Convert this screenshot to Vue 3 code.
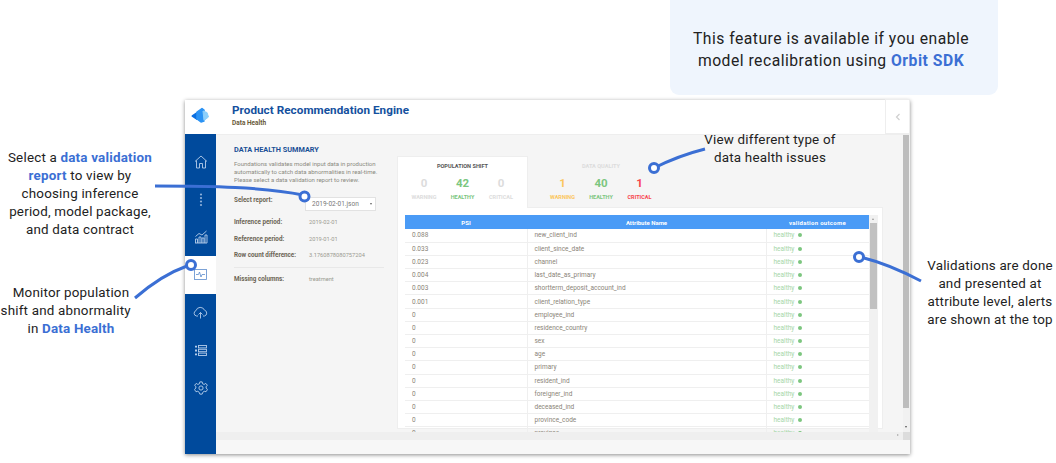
<script setup>
const rows = [
  ['0.088', 'new_client_ind'],
  ['0.033', 'client_since_date'],
  ['0.023', 'channel'],
  ['0.004', 'last_date_as_primary'],
  ['0.003', 'shortterm_deposit_account_ind'],
  ['0.001', 'client_relation_type'],
  ['0', 'employee_ind'],
  ['0', 'residence_country'],
  ['0', 'sex'],
  ['0', 'age'],
  ['0', 'primary'],
  ['0', 'resident_ind'],
  ['0', 'foreigner_ind'],
  ['0', 'deceased_ind'],
  ['0', 'province_code'],
  ['0', 'province'],
]

const info = [
  ['Inference period:', '2019-02-01'],
  ['Reference period:', '2019-01-01'],
  ['Row count difference:', '3.1760878080757204'],
]
</script>

<template>
  <div class="page">
    <div class="window">
      <header class="top">
        <div class="logo">
          <svg width="19" height="17" viewBox="0 0 19 17" stroke-linejoin="round">
            <path d="M1.500 9 L6 6 L6 12 Z" fill="#0b6ee0" stroke="#0b6ee0" stroke-width="2" />
            <path d="M6 5 L11 1.500 L13 3 L13 14 L10 15 L6 12 Z" fill="#2a92f4" stroke="#2a92f4" stroke-width="1.500" />
            <path d="M12 4 L16 5.500 L17.500 10 L13 13.500 Z" fill="#8ccffb" stroke="#8ccffb" stroke-width="1" />
          </svg>
        </div>
        <div class="titles">
          <div class="app-name">Product Recommendation Engine</div>
          <div class="app-sub">Data Health</div>
        </div>
        <button class="collapse">
          <svg width="6" height="8" viewBox="0 0 6 8"><path d="M4.500 1 L1.500 4 L4.500 7" fill="none" stroke="#cfcfcf" stroke-width="1.200" /></svg>
        </button>
      </header>

      <div class="body">
        <nav class="side">
          <div class="nav-item">
            <svg width="14" height="14" viewBox="0 0 14 14" fill="none" stroke="#b5cdea" stroke-width=".9">
              <path d="M1 6.500 L7 1 L13 6.500 M2.500 5.500 V13 H5.500 V8.500 H8.500 V13 H11.500 V5.500" />
            </svg>
          </div>
          <div class="nav-item">
            <svg width="4" height="14" viewBox="0 0 4 14" fill="#8fb0d9">
              <circle cx="2" cy="1.500" r="1.100" /><circle cx="2" cy="5" r="1.100" /><circle cx="2" cy="8.500" r="1.100" /><circle cx="2" cy="12" r="1.100" />
            </svg>
          </div>
          <div class="nav-item">
            <svg width="14" height="14" viewBox="0 0 14 14" fill="none" stroke="#b5cdea" stroke-width=".9">
              <path d="M1 13 H13 M1.500 13 V9 H3.500 V13 M5 13 V7 H7 V13 M8 13 V8 H10 V13 M11 13 V5 H13 V13 M1.500 6.500 L5 3.500 L8 5 L12.500 1" />
            </svg>
          </div>
          <div class="nav-item active">
            <svg width="13" height="11" viewBox="0 0 13 11" fill="none" stroke="#5d8ccc" stroke-width=".8">
              <rect x=".5" y=".5" width="12" height="10" />
              <path d="M2 5.500 H4.500 L5.500 3 L7 8 L8 5.500 H11" />
            </svg>
          </div>
          <div class="nav-item">
            <svg width="15" height="13" viewBox="0 0 15 13" fill="none" stroke="#b5cdea" stroke-width=".9">
              <path d="M5 10 H3.500 A2.800 2.800 0 0 1 3 4.600 A4.500 4.500 0 0 1 11.500 4.200 A3 3 0 0 1 11.500 10 H10 M7.500 12.500 V6.500 M5.500 8.500 L7.500 6.500 L9.500 8.500" />
            </svg>
          </div>
          <div class="nav-item">
            <svg width="12" height="11" viewBox="0 0 12 11" fill="none" stroke="#b5cdea" stroke-width=".9">
              <path d="M0 1.700 H2 M0 5.500 H2 M0 9.300 H2" stroke-width="1.800" />
              <rect x="3.500" y=".5" width="8" height="2.400" /><rect x="3.500" y="4.300" width="8" height="2.400" /><rect x="3.500" y="8.100" width="8" height="2.400" />
            </svg>
          </div>
          <div class="nav-item">
            <svg width="14" height="14" viewBox="0 0 24 24" fill="none" stroke="#b5cdea" stroke-width="1.600">
              <circle cx="12" cy="12" r="3.600" />
              <path d="M10 1.500 H14 L14.700 4.700 L17.400 5.900 L20.200 4.100 L23 7.500 L20.500 9.700 L21 12 L23 14.800 L20.600 18.400 L17.500 17.600 L15 19.500 L14 22.500 H10 L9 19.500 L6.500 17.600 L3.400 18.400 L1 14.800 L3 12 L3.500 9.700 L1 7.500 L3.800 4.100 L6.600 5.900 L9.300 4.700 Z" />
            </svg>
          </div>
        </nav>

        <main class="main">
          <div class="content">
            <section class="summary">
              <h2>DATA HEALTH SUMMARY</h2>
              <p class="desc">Foundations validates model input data in production<br />automatically to catch data abnormalities in real-time.<br />Please select a data validation report to review.</p>
              <div class="select-row">
                <span class="lbl">Select report:</span>
                <div class="select"><span>2019-02-01.json</span><i class="caret"></i></div>
              </div>
              <div v-for="item in info" :key="item[0]" class="info-row">
                <span class="lbl">{{ item[0] }}</span>
                <span class="val">{{ item[1] }}</span>
              </div>
              <div class="info-row missing">
                <span class="lbl">Missing columns:</span>
                <span class="val">treatment</span>
              </div>
            </section>

            <section class="results">
              <div class="tabs">
                <div class="tab on">
                  <div class="tab-name">POPULATION SHIFT</div>
                  <div class="stats">
                    <div class="stat off"><b>0</b><span>WARNING</span></div>
                    <div class="stat green"><b>42</b><span>HEALTHY</span></div>
                    <div class="stat off"><b>0</b><span>CRITICAL</span></div>
                  </div>
                </div>
                <div class="tab second">
                  <div class="tab-name faded">DATA QUALITY</div>
                  <div class="stats">
                    <div class="stat amber"><b>1</b><span>WARNING</span></div>
                    <div class="stat green"><b>40</b><span>HEALTHY</span></div>
                    <div class="stat red"><b>1</b><span>CRITICAL</span></div>
                  </div>
                </div>
              </div>
              <div class="panel">
                <div class="tbl-wrap">
                  <table>
                    <thead>
                      <tr><th class="c1">PSI</th><th class="c2">Attribute Name</th><th class="c3">validation outcome</th></tr>
                    </thead>
                    <tbody>
                      <tr v-for="row in rows" :key="row[1]">
                        <td>{{ row[0] }}</td>
                        <td>{{ row[1] }}</td>
                        <td class="ok">healthy <i class="dot"></i></td>
                      </tr>
                    </tbody>
                  </table>
                  <div class="tbl-scroll">
                    <i class="arrow up"></i>
                    <div class="tbl-thumb"></div>
                  </div>
                </div>
              </div>
            </section>
          </div>
          <div class="hbar"><i class="arrow right"></i><i class="corner"></i></div>
          <div class="foot"></div>
          <div class="vtrack">
            <div class="vbar"></div>
            <i class="arrow down"></i>
          </div>
        </main>
      </div>
    </div>

    <svg class="lines" width="1056" height="463" viewBox="0 0 1056 463" fill="none" stroke="#3b6fd4" stroke-width="3">
      <path d="M155 186 C210 186 265 187 303 195" />
      <circle cx="304.500" cy="196.500" r="4.500" fill="#fff" />
      <path d="M135 298 C150 285 170 272 187 266" />
      <circle cx="191" cy="265" r="4.500" fill="#fff" />
      <path d="M654 168 C670 160 685 154 705 149" />
      <circle cx="654" cy="168" r="4.500" fill="#fff" />
      <path d="M864 258 C880 262 900 270 921 281" />
      <circle cx="859" cy="257" r="4.500" fill="#fff" />
    </svg>

    <div class="box">This feature is available if you enable<br />model recalibration using <b>Orbit SDK</b></div>
    <p class="note n1">Select a <b>data validation</b><br /><b>report</b> to view by<br />choosing inference<br />period, model package,<br />and data contract</p>
    <p class="note n2">Monitor population<br />shift and abnormality&nbsp;&nbsp;&nbsp;<br />in <b>Data Health</b></p>
    <p class="note n3">View different type of<br />data health issues</p>
    <p class="note n4">Validations are done<br />and presented at<br />attribute level, alerts<br />are shown at the top</p>
  </div>
</template>

<style scoped>
.page {
  position: relative;
  width: 1056px;
  height: 463px;
  overflow: hidden;
  background: #fff;
  padding: 100px 0 0 185px;
  box-sizing: border-box;
  font-family: Roboto, "Liberation Sans", sans-serif;
}

.window {
  width: 725px;
  height: 354px;
  background: #fff;
  display: flex;
  flex-direction: column;
  box-shadow: 0 1px 4px rgba(0, 0, 0, 0.45);
}

.top {
  height: 34px;
  display: flex;
  align-items: center;
  flex-shrink: 0;
  position: relative;
}

.logo {
  width: 47px;
  display: flex;
  justify-content: center;
  padding-right: 17px;
  box-sizing: border-box;
  margin-top: -3px;
}

.titles {
  padding-bottom: 4.500px;
}

.app-name {
  font-size: 11.700px;
  font-weight: 700;
  color: #14509e;
  letter-spacing: 0.05px;
  line-height: 14px;
}

.app-sub {
  margin-top: 1.500px;
  font-size: 6.500px;
  font-weight: 700;
  color: #6a5a3a;
  line-height: 8px;
}

.collapse {
  position: absolute;
  right: 0;
  top: -1px;
  width: 25px;
  height: 35px;
  background: #fff;
  border: 1px solid #eee;
  padding: 0;
  display: flex;
  align-items: center;
  justify-content: center;
}

.body {
  flex: 1;
  display: flex;
  min-height: 0;
}

.side {
  width: 31px;
  flex-shrink: 0;
  background: #004a9c;
  display: flex;
  flex-direction: column;
  padding-top: 9px;
  box-sizing: border-box;
}

.nav-item {
  height: 37.700px;
  display: flex;
  align-items: center;
  justify-content: center;
}

.nav-item.active {
  background: #fff;
}

.main {
  flex: 1;
  min-width: 0;
  position: relative;
  background: #f5f5f5;
  display: flex;
  flex-direction: column;
  border-top: 1px solid #eee;
}

.content {
  height: 297px;
  overflow: hidden;
  display: flex;
  flex-shrink: 0;
}

.summary {
  width: 150px;
  margin-left: 18px;
  flex-shrink: 0;
  padding-top: 10px;
}

h2 {
  margin: 0;
  font-size: 7.300px;
  line-height: 10px;
  font-weight: 700;
  color: #1a4f96;
}

.desc {
  margin: 5px 0 0;
  font-size: 6px;
  line-height: 8px;
  color: #8a8a80;
  white-space: nowrap;
}

.select-row {
  display: flex;
  align-items: flex-start;
  margin-top: 12px;
  height: 22px;
}

.lbl {
  width: 75px;
  flex-shrink: 0;
  font-size: 6.300px;
  font-weight: 700;
  color: #6b6454;
}

.select {
  width: 60px;
  height: 12px;
  margin-left: -4px;
  margin-top: 1px;
  border: 1px solid #e2e2e2;
  background: #fff;
  font-size: 6.500px;
  color: #777;
  display: flex;
  align-items: center;
  justify-content: space-between;
  padding: 0 3px 0 6px;
}

.caret {
  width: 0;
  height: 0;
  border-left: 1.500px solid transparent;
  border-right: 1.500px solid transparent;
  border-top: 2px solid #666;
}

.info-row {
  display: flex;
  height: 16.500px;
  align-items: center;
}

.select-row + .info-row {
  margin-top: -4px;
}

.val {
  font-size: 5.700px;
  color: #9a9a90;
}

.missing {
  border-top: 1px solid #e8e8e8;
  margin-top: 3.500px;
  height: 22px;
}

.results {
  width: 486px;
  margin-left: 13px;
  padding-top: 21px;
  flex-shrink: 0;
}

.tabs {
  display: flex;
  height: 52px;
}

.tab {
  width: 131px;
  text-align: center;
}

.tab.second {
  width: 146px;
}

.tab.on {
  background: #fff;
  border: 1px solid #eee;
  border-bottom: 0;
  box-sizing: border-box;
}

.tab-name {
  font-size: 5.600px;
  font-weight: 700;
  color: #555;
  line-height: 8px;
  margin-top: 5px;
}

.tab.second .tab-name {
  margin-top: 6px;
}

.tab-name.faded {
  color: #dcdcdc;
}

.stats {
  display: flex;
  justify-content: center;
  margin-top: 6px;
}

.stat {
  width: 38.500px;
  display: flex;
  flex-direction: column;
  align-items: center;
}

.stat b {
  font-size: 11.500px;
  line-height: 14px;
}

.stat span {
  font-size: 5.500px;
  font-weight: 700;
  line-height: 8px;
  margin-top: 3px;
}

.off { color: #dcdcdc; }
.green { color: #7cc67f; }
.amber { color: #fbc65d; }
.red { color: #f7444e; }

.panel {
  background: #fff;
  border: 1px solid #eee;
  height: 222px;
  padding: 7px 0 0 7px;
  box-sizing: border-box;
  width: 486px;
  margin-top: -1px;
}

.tbl-wrap {
  display: flex;
  height: 230px;
}

table {
  width: 464px;
  flex-shrink: 0;
  border-collapse: collapse;
  table-layout: fixed;
  align-self: flex-start;
}

th {
  background: #4a9bf6;
  color: #fff;
  font-size: 6px;
  font-weight: 700;
  height: 14px;
  padding: 0;
}

.c1 { width: 122px; }
.c2 { width: 239px; }
.c3 { width: 103px; letter-spacing: 0.3px; }

td {
  height: 13.200px;
  padding: 0 0 0 7px;
  box-sizing: border-box;
  font-size: 6.500px;
  color: #8a8478;
  border-bottom: 1px solid #efefef;
  border-left: 1px solid #efefef;
}

td:first-child {
  border-left: 0;
}

.ok {
  color: #a5d6a7;
}

.dot {
  display: inline-block;
  width: 4px;
  height: 4px;
  margin-left: 1.500px;
  border-radius: 50%;
  background: #7cc67f;
}

.tbl-scroll {
  width: 9px;
  height: 218px;
  background: #f1f1f1;
  position: relative;
}

.tbl-thumb {
  position: absolute;
  top: 8px;
  left: 1px;
  right: 1px;
  height: 86px;
  background: #c1c1c1;
}

.arrow {
  position: absolute;
  width: 0;
  height: 0;
}

.arrow.up {
  top: 3px;
  left: 3px;
  border-left: 1.500px solid transparent;
  border-right: 1.500px solid transparent;
  border-bottom: 2px solid #999;
}

.hbar {
  height: 8px;
  background: #efefef;
  flex-shrink: 0;
  position: relative;
}

.arrow.right {
  right: 11px;
  top: 2px;
  border-top: 1.500px solid transparent;
  border-bottom: 1.500px solid transparent;
  border-left: 2px solid #aaa;
}

.corner {
  position: absolute;
  right: 0;
  top: 0;
  width: 7px;
  height: 8px;
  background: #dcdcdc;
}

.foot {
  flex: 1;
  background: #f7f7f7;
}

.vtrack {
  position: absolute;
  top: 0;
  right: 0;
  width: 7px;
  height: 297px;
  background: #f1f1f1;
}

.vbar {
  width: 6px;
  height: 273px;
  background: #bdbdbd;
}

.arrow.down {
  left: 2px;
  top: 291px;
  border-left: 1.500px solid transparent;
  border-right: 1.500px solid transparent;
  border-top: 2px solid #555;
}

.lines {
  position: absolute;
  left: 0;
  top: 0;
  pointer-events: none;
}

.box {
  position: absolute;
  left: 670px;
  top: -10px;
  width: 328px;
  height: 105px;
  padding: 38px 6px 0 0;
  box-sizing: border-box;
  border-radius: 9px;
  background: #eff5fd;
  text-align: center;
  font-size: 15.700px;
  line-height: 22px;
  letter-spacing: 0.5px;
  color: #222;
}

.box b,
.note b {
  color: #3b6fd4;
}

.note {
  position: absolute;
  margin: 0;
  text-align: center;
  font-size: 13.400px;
  line-height: 18px;
  letter-spacing: 0.2px;
  color: #222;
  white-space: nowrap;
}

.n1 { left: 0; top: 149px; width: 160px; }
.n2 { left: 0; top: 284px; width: 142px; }
.n3 { left: 690px; top: 131px; width: 160px; }
.n4 { left: 920px; top: 257px; width: 140px; }
</style>
